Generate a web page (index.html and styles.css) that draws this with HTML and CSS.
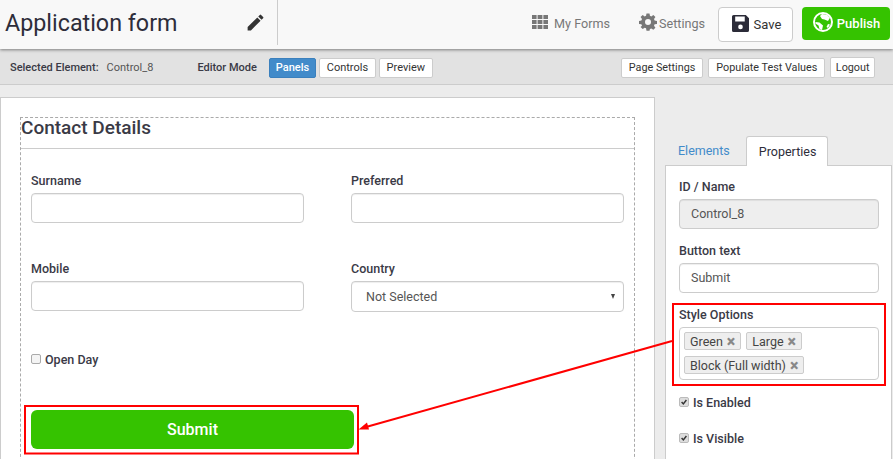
FILE: index.html
```html
<!DOCTYPE html>
<html lang="en">
<head>
<meta charset="utf-8">
<title>Application form</title>
<link rel="stylesheet" href="styles.css">
</head>
<body>
<header class="topbar">
  <div class="title-block">
    <h1 class="app-title">Application form</h1>
    <svg class="pencil" viewBox="0 0 24 24"><path d="M3 17.25V21h3.75L17.81 9.94l-3.75-3.75L3 17.25zM20.71 7.04a1 1 0 0 0 0-1.41l-2.34-2.34a1 1 0 0 0-1.41 0l-1.83 1.83 3.75 3.75 1.83-1.83z"/></svg>
  </div>
  <nav class="topnav">
    <a class="navlink forms-link"><svg class="grid-icon" viewBox="0 0 16 14"><path d="M0 0h4.6v4H0zM5.6 0h4.8v4H5.6zM11.4 0H16v4h-4.6zM0 5h4.6v4H0zM5.6 5h4.8v4H5.6zM11.4 5H16v4h-4.6zM0 10h4.6v4H0zM5.6 10h4.8v4H5.6zM11.4 10H16v4h-4.6z"/></svg>My Forms</a>
    <a class="navlink settings-link"><svg class="gear-icon" viewBox="0 0 24 24"><path fill-rule="evenodd" d="M10 1h4l.6 3.2 1.8.8L19.100 3.100 21.900 5.900 20 8.600l.8 1.800L24 11v4l-3.200.6-.8 1.800 1.900 2.700-2.800 2.800-2.700-1.900-1.800.8L14 24h-4l-.6-3.200-1.800-.8-2.700 1.900-2.800-2.800L4 17.400l-.8-1.800L0 15v-4l3.200-.6.800-1.800-1.900-2.700 2.800-2.800L7.600 5l1.800-.8zM12 8.500a4 4 0 1 0 0 8 4 4 0 0 0 0-8z" transform="translate(0 -.5)"/></svg>Settings</a>
    <button class="save-btn"><svg class="save-icon" viewBox="0 0 16 16"><path fill-rule="evenodd" d="M1.500 0H13l3 3v11.500a1.500 1.500 0 0 1-1.500 1.500h-13A1.500 1.500 0 0 1 0 14.500v-13A1.500 1.500 0 0 1 1.500 0zM3 1.500V6h9V1.500zM8 9a2.200 2.200 0 1 0 0 4.400A2.200 2.200 0 0 0 8 9z"/></svg>Save</button>
    <button class="publish-btn"><svg class="globe-icon" viewBox="0 0 20 20"><circle cx="10" cy="10" r="9" fill="none" stroke="#fff" stroke-width="2"/><path fill="#fff" d="M9 2l5 .8 3 3-2 3.200-3.500-1.500-2.500-.5-2-3zM2.500 10l4 .5 3.500 3-1 4.500-2.500-1-1-3.500-3-2zM15 12l2 .5-2 3.500-1.500-1z"/></svg>Publish</button>
  </nav>
</header>

<section class="toolbar">
  <div class="toolbar-left">
    <strong class="sel-label">Selected Element:</strong>
    <span class="sel-value">Control_8</span>
    <strong class="mode-label">Editor Mode</strong>
    <div class="mode-group">
      <button class="tool-btn active">Panels</button>
      <button class="tool-btn controls">Controls</button>
      <button class="tool-btn">Preview</button>
    </div>
  </div>
  <div class="toolbar-right">
    <button class="tool-btn">Page Settings</button>
    <button class="tool-btn">Populate Test Values</button>
    <button class="tool-btn logout">Logout</button>
  </div>
</section>

<main class="workspace">
  <section class="canvas">
    <div class="panel-box">
      <h2 class="panel-title">Contact Details</h2>
      <div class="fields">
        <div class="field"><label class="label">Surname</label><div class="input"></div></div>
        <div class="field"><label class="label">Preferred</label><div class="input"></div></div>
        <div class="field"><label class="label">Mobile</label><div class="input"></div></div>
        <div class="field"><label class="label">Country</label><div class="input select"><span>Not Selected</span><i class="caret"></i></div></div>
      </div>
      <div class="check-row open-day"><span class="check"></span><span class="check-text">Open Day</span></div>
      <button class="submit-btn">Submit</button>
    </div>
  </section>

  <aside class="sidebar">
    <div class="tabs">
      <span class="tab">Elements</span>
      <span class="tab current">Properties</span>
    </div>
    <div class="props">
      <label class="label">ID / Name</label>
      <div class="input disabled prop-input">Control_8</div>
      <label class="label">Button text</label>
      <div class="input prop-input">Submit</div>
      <label class="label">Style Options</label>
      <div class="tagbox">
        <span class="tag">Green<b class="x">×</b></span>
        <span class="tag">Large<b class="x">×</b></span>
        <span class="tag">Block (Full width)<b class="x">×</b></span>
      </div>
      <div class="check-row prop-check"><span class="check on">
        <svg viewBox="0 0 10 10"><path d="M2 5l2.200 2.400L8 2.500" fill="none" stroke="#333" stroke-width="1.800"/></svg></span><span class="check-text">Is Enabled</span></div>
      <div class="check-row prop-check"><span class="check on">
        <svg viewBox="0 0 10 10"><path d="M2 5l2.200 2.400L8 2.500" fill="none" stroke="#333" stroke-width="1.800"/></svg></span><span class="check-text">Is Visible</span></div>
    </div>
  </aside>
</main>

<svg class="annotations" viewBox="0 0 893 459">
  <rect x="25" y="406" width="333" height="47.500" fill="none" stroke="#f00" stroke-width="2"/>
  <rect x="673" y="304" width="212" height="81" fill="none" stroke="#f00" stroke-width="2"/>
  <line x1="672" y1="341" x2="366" y2="427" stroke="#f00" stroke-width="2"/>
  <path d="M358.500 429.500l8.500-7 2 7z" fill="#f00"/>
</svg>
</body>
</html>
```
FILE: styles.css
```css
* { box-sizing: border-box; }
html, body { margin: 0; height: 459px; overflow: hidden; }
body {
  position: relative;
  background: #ececec;
  color: #2d2d3a;
  font-family: Roboto, "Liberation Sans", sans-serif;
  font-size: 12px;
}
button { font-family: inherit; cursor: pointer; }

.topbar {
  height: 49px;
  display: flex;
  justify-content: space-between;
  background: #f8f8f8;
  box-shadow: 0 1px 3px rgba(0, 0, 0, .45);
  position: relative;
}
.title-block {
  width: 278px;
  height: 45px;
  padding: 0 11px 0 5px;
  border-right: 1px solid #ccc;
  display: flex;
  align-items: center;
  justify-content: space-between;
}
.app-title { margin: 0; font-size: 23.300px; font-weight: 400; color: #2d2d3a; }
.pencil { width: 21px; height: 21px; fill: #333; }

.topnav { display: flex; align-items: flex-start; padding: 7px 3px 0 0; }
.navlink { display: flex; align-items: center; height: 33px; font-size: 12.600px; color: #777; }
.forms-link { margin-right: 29px; }
.settings-link { margin-right: 13px; }
.grid-icon { width: 16px; height: 14px; margin: -3px 6px 0 0; fill: #777; }
.gear-icon { width: 18px; height: 18px; margin: -3px 2px 0 0; fill: #777; }
.save-btn {
  width: 75px;
  height: 35px;
  margin-right: 9px;
  padding: 0 0 0 2px;
  display: flex;
  align-items: center;
  justify-content: center;
  background: #fff;
  border: 1px solid #ccc;
  border-radius: 4px;
  font-size: 13px;
  color: #333;
}
.save-icon { width: 17px; height: 17px; margin: -2px 5px 0 0; fill: #2b2b38; }
.publish-btn {
  width: 88px;
  height: 33px;
  padding: 0 0 0 1px;
  display: flex;
  align-items: center;
  justify-content: center;
  background: #35c300;
  border: 0;
  border-radius: 4px;
  font-size: 13px;
  font-weight: 500;
  color: #fff;
}
.globe-icon { width: 20px; height: 20px; margin: -3px 4px 0 0; }

.toolbar {
  height: 36px;
  display: flex;
  justify-content: space-between;
  align-items: center;
  padding: 2px 18px 0 10px;
  background: #e2e2e2;
  border-bottom: 1px solid #ccc;
  font-size: 11px;
}
.toolbar-left, .toolbar-right, .mode-group { display: flex; align-items: center; }
.toolbar-right { gap: 5px; }
.sel-label, .mode-label { font-weight: 500; color: #3a3a46; }
.sel-value { margin-left: 8px; color: #555; }
.mode-label { margin-left: 44px; }
.mode-group { gap: 3px; margin-left: 12px; }
.tool-btn {
  height: 20px;
  padding: 0 7px;
  background: #fff;
  border: 1px solid #ccc;
  border-radius: 2px;
  font-size: 11px;
  color: #333;
}
.tool-btn.active { background: #428bca; border-color: #3b80bd; color: #fff; font-weight: 500; padding: 0 6px; }
.tool-btn.controls { padding: 0 6.500px; }
.toolbar-right .tool-btn { font-size: 10.800px; padding: 0 7px; }
.toolbar-right .tool-btn.logout { height: 21px; padding: 0 4.500px; margin-top: -1px; }

.workspace { display: flex; align-items: flex-start; height: 374px; }
.canvas {
  width: 655px;
  height: 374px;
  margin-top: 12px;
  padding: 19px 19px 0 20px;
  background: #fff;
  border: 1px solid #ccc;
}
.panel-box {
  width: 615px;
  height: 360px;
  border: 1px dashed #aaa;
  border-bottom: 0;
  margin-left: -1px;
}
.panel-title {
  margin: 0;
  height: 31px;
  font-size: 19px;
  font-weight: 500;
  line-height: 20px;
  border-bottom: 1px solid #ccc;
  color: #3a3a46;
}
.fields {
  display: grid;
  grid-template-columns: 273px 273px;
  column-gap: 47px;
  row-gap: 39px;
  padding: 25px 0 0 10px;
}
.label { display: block; font-size: 12.500px; font-weight: 500; line-height: 14px; color: #3a3a46; }
.input {
  height: 30px;
  margin-top: 5px;
  background: #fff;
  border: 1px solid #ccc;
  border-radius: 4px;
  box-shadow: inset 0 1px 1px rgba(0, 0, 0, .07);
  color: #555;
}
.select {
  height: 31px;
  display: flex;
  align-items: center;
  justify-content: space-between;
  padding: 0 8px 0 14px;
  font-size: 12.500px;
}
.caret {
  width: 0;
  height: 0;
  border-left: 2.500px solid transparent;
  border-right: 2.500px solid transparent;
  border-top: 5px solid #444;
}
.check-row { display: flex; align-items: center; }
.check {
  width: 10px;
  height: 10px;
  display: block;
  background: #f4f4f4;
  border: 1px solid #aaa;
  border-radius: 2px;
}
.check.on { background: #ddd; border-color: #bbb; }
.check svg { display: block; width: 8px; height: 8px; }
.check-text { margin-left: 4px; font-size: 12.500px; font-weight: 500; color: #3a3a46; }
.open-day { margin: 40px 0 0 10px; height: 14px; }
.submit-btn {
  display: block;
  width: 323px;
  height: 39px;
  margin: 44px 0 0 10px;
  background: #35c300;
  border: 0;
  border-radius: 6px;
  color: #fff;
  font-size: 16px;
  font-weight: 500;
}

.sidebar { width: 238px; padding: 51px 0 0 10px; }
.tabs { height: 30px; display: flex; align-items: flex-end; padding-left: 1px; position: relative; z-index: 1; }
.tab { padding: 0 12px; height: 30px; line-height: 29px; font-size: 12.500px; color: #428bca; }
.tab.current {
  margin-left: 4px;
  padding: 0 11px 0 12px;
  background: #fff;
  border: 1px solid #ccc;
  border-bottom: 0;
  border-radius: 3px 3px 0 0;
  color: #2d2d3a;
}
.props {
  width: 227px;
  height: 300px;
  margin-top: -1px;
  padding: 14px 12px 0 13px;
  background: #fff;
  border: 1px solid #ccc;
}
.prop-input {
  height: 30px;
  margin: 5px 0 15px;
  padding: 0 11px;
  line-height: 28px;
  font-size: 12.500px;
}
.disabled { background: #eee; }
.tagbox {
  height: 53px;
  margin-top: 5px;
  padding: 4px 4px;
  display: flex;
  flex-wrap: wrap;
  align-content: flex-start;
  gap: 6px 5px;
  border: 1px solid #ccc;
  border-radius: 4px;
}
.tag {
  height: 18px;
  display: flex;
  align-items: center;
  padding: 0 5px;
  background: #eee;
  border: 1px solid #ccc;
  border-radius: 2px;
  font-size: 12.500px;
  color: #444;
}
.x { margin: 2px 0 0 4px; font-size: 16px; font-weight: 900; color: #888; line-height: 1; }
.prop-check { height: 14px; margin-top: 15px; }
.prop-check + .prop-check { margin-top: 22px; }

.annotations { position: absolute; left: 0; top: 0; width: 893px; height: 459px; pointer-events: none; }
```
